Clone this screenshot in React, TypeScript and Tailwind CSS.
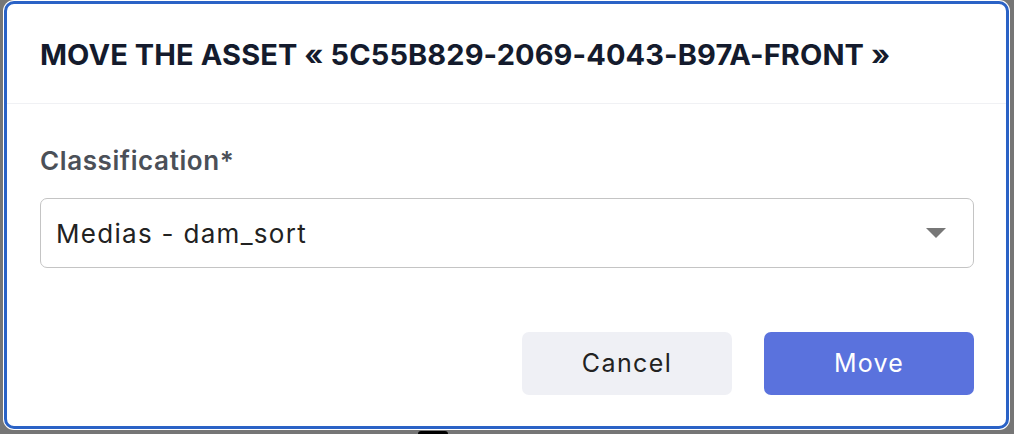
const FONT = { fontFamily: "Inter, 'Noto Sans', sans-serif" };

/* ========= Move dialog ========= */
export default function App() {
  const assetId = "5C55B829-2069-4043-B97A-FRONT";

  return (
    <div className="flex h-[434px] w-[1014px] flex-col bg-[#767676]" style={FONT}>
      <div className="flex pl-[4px] pt-[1px]">
        <div className="flex h-[428px] w-[1005px] flex-col rounded-[10px] border-[3px] border-[#2a62c6] bg-white shadow-[0_0_0_1px_#ffffff]">
          {/* Header */}
          <header className="flex h-[100px] items-center border-b border-[#f0f1f4] pl-[33px] pt-[2px]">
            <h1 className="text-[29px] font-bold tracking-[0.1px] text-[#141b2d]">
              MOVE THE ASSET « {assetId} »
            </h1>
          </header>

          {/* Body */}
          <div className="flex flex-col pl-[33px] pr-[32px]">
            <label className="mt-[36px] flex h-[40px] items-center text-[26px] font-semibold tracking-[0.6px] text-[#4b5058]">
              Classification*
            </label>

            <button className="mt-[18px] flex h-[70px] w-full items-center justify-between rounded-[7px] border border-[#c4c4c4] pl-[15px] pr-[27px] text-left">
              <span className="text-[26px] tracking-[1.3px] text-[#222222]">Medias - dam_sort</span>
              <svg width="20" height="10" viewBox="0 0 20 10">
                <path d="M0 0 L20 0 L10 10 Z" fill="#777777" />
              </svg>
            </button>

            <div className="mt-[64px] flex justify-end gap-[32px]">
              <button className="flex h-[63px] w-[210px] items-center justify-center rounded-[7px] bg-[#eff0f5] text-[25px] tracking-[1.4px] text-[#222222]">
                Cancel
              </button>
              <button className="flex h-[63px] w-[210px] items-center justify-center rounded-[7px] bg-[#5a72dd] text-[25px] tracking-[1.2px] text-white">
                Move
              </button>
            </div>
          </div>
        </div>
      </div>
      <div className="ml-[418px] mt-[2px] h-[3px] w-[30px] rounded-t-full bg-black" />
    </div>
  );
}
